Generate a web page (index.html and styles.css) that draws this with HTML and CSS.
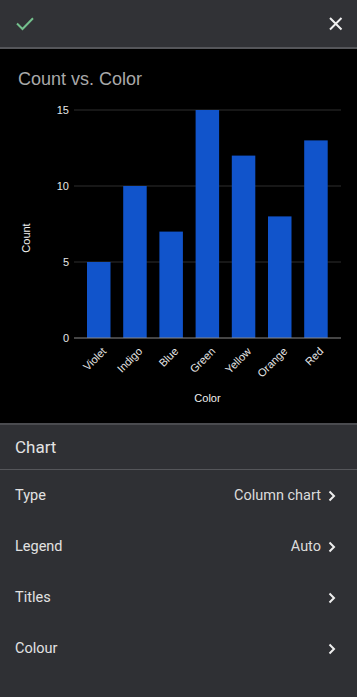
FILE: index.html
```html
<!DOCTYPE html>
<html lang="en">
<head>
  <meta charset="UTF-8"/>
  <meta name="viewport" content="width=device-width,initial-scale=1.0"/>
  <title>Chart editor</title>
  <link rel="stylesheet" href="styles.css">
</head>
<body>
  <div class="topbar">
    <button class="icon-btn done" title="Done">
      <svg viewBox="0 0 18 14" fill="none" stroke="currentColor">
        <polyline points="1,6.5 6.5,12 17,1.2" stroke-width="2"/>
      </svg>
    </button>
    <button class="icon-btn close" title="Close">
      <svg viewBox="0 0 14 14" fill="none" stroke="currentColor">
        <path d="M1 1 12.5 12.5M12.5 1 1 12.5" stroke-width="2"/>
      </svg>
    </button>
  </div>

  <div class="chart">
    <svg viewBox="0 49 357 374" width="357" height="374">
      <text class="c-title" x="18" y="85">Count vs. Color</text>

      <g class="grid">
        <line x1="74" y1="110" x2="341" y2="110"/>
        <line x1="74" y1="186" x2="341" y2="186"/>
        <line x1="74" y1="262" x2="341" y2="262"/>
      </g>

      <g class="ylabels">
        <text x="69" y="114">15</text>
        <text x="69" y="190">10</text>
        <text x="69" y="266">5</text>
        <text x="69" y="342">0</text>
      </g>

      <g class="bars">
        <rect x="87" y="262" width="23.5" height="76"/>
        <rect x="123.2" y="186" width="23.5" height="152"/>
        <rect x="159.4" y="231.6" width="23.5" height="106.4"/>
        <rect x="195.6" y="110" width="23.5" height="228"/>
        <rect x="231.8" y="155.6" width="23.5" height="182.4"/>
        <rect x="268" y="216.4" width="23.5" height="121.6"/>
        <rect x="304.2" y="140.4" width="23.5" height="197.6"/>
      </g>

      <line class="axis" x1="74" y1="338" x2="341" y2="338"/>

      <g class="xlabels">
        <text transform="translate(107,352) rotate(-45)">Violet</text>
        <text transform="translate(143,352) rotate(-45)">Indigo</text>
        <text transform="translate(179,352) rotate(-45)">Blue</text>
        <text transform="translate(216,352) rotate(-45)">Green</text>
        <text transform="translate(252,352) rotate(-45)">Yellow</text>
        <text transform="translate(288,352) rotate(-45)">Orange</text>
        <text transform="translate(324,352) rotate(-45)">Red</text>
      </g>

      <text class="axis-title" x="207.5" y="402" text-anchor="middle">Color</text>
      <text class="axis-title" transform="translate(30,238) rotate(-90)" text-anchor="middle">Count</text>
    </svg>
  </div>

  <div class="panel">
    <div class="panel-head">Chart</div>
    <div class="row">
      <span class="row-label">Type</span>
      <span class="row-value">Column chart</span>
      <svg class="chev" viewBox="0 0 8 12" fill="none" stroke="currentColor"><path d="M1.5 1.5 6 6 1.5 10.5" stroke-width="2"/></svg>
    </div>
    <div class="row">
      <span class="row-label">Legend</span>
      <span class="row-value">Auto</span>
      <svg class="chev" viewBox="0 0 8 12" fill="none" stroke="currentColor"><path d="M1.5 1.5 6 6 1.5 10.5" stroke-width="2"/></svg>
    </div>
    <div class="row">
      <span class="row-label">Titles</span>
      <span class="row-value"></span>
      <svg class="chev" viewBox="0 0 8 12" fill="none" stroke="currentColor"><path d="M1.5 1.5 6 6 1.5 10.5" stroke-width="2"/></svg>
    </div>
    <div class="row">
      <span class="row-label">Colour</span>
      <span class="row-value"></span>
      <svg class="chev" viewBox="0 0 8 12" fill="none" stroke="currentColor"><path d="M1.5 1.5 6 6 1.5 10.5" stroke-width="2"/></svg>
    </div>
  </div>
</body>
</html>
```

FILE: styles.css
```css
body { margin:0; background:#2f3034; color:#e3e3e3; font-family:Roboto,"Liberation Sans",sans-serif; height:697px; overflow:hidden; }

.topbar {
  display:flex; align-items:center; justify-content:space-between;
  height:47px; background:#313236; border-bottom:2px solid #55565a;
  padding:0 14px 0 16px; box-sizing:content-box;
}
.icon-btn { border:none; background:none; padding:0; display:flex; cursor:pointer; }
.icon-btn.done { color:#74c08d; }
.icon-btn.done svg { width:18px; height:14px; margin-top:1px; }
.icon-btn.close { color:#f0f0f0; }
.icon-btn.close svg { width:14px; height:14px; margin-top:1px; }

.chart { background:#000; height:374px; }
.chart svg { display:block; font-family:"Liberation Sans",Arial,sans-serif; }
.c-title { font-size:18px; fill:#a9a9a9; }
.grid line { stroke:#2e2e2e; stroke-width:1; }
.axis { stroke:#8a8a8a; stroke-width:1.2; }
.ylabels text { font-size:11px; fill:#e6e6e6; text-anchor:end; }
.bars rect { fill:#1154cb; }
.xlabels text { font-size:11px; fill:#e6e6e6; text-anchor:end; }
.axis-title { font-size:11px; fill:#f0f0f0; }

.panel { border-top:2px solid #4a4b4f; }
.panel-head {
  height:44px; display:flex; align-items:center; padding:0 15px;
  font-size:17px; color:#e3e3e3; border-bottom:1px solid #55565a;
}
.row { display:flex; align-items:center; height:51px; padding:0 21px 0 15px; font-size:14.5px; }
.row-label { color:#e2e2e2; }
.row-value { margin-left:auto; color:#dcdcdc; }
.chev { width:8px; height:12px; margin-left:7px; color:#eee; }
```
